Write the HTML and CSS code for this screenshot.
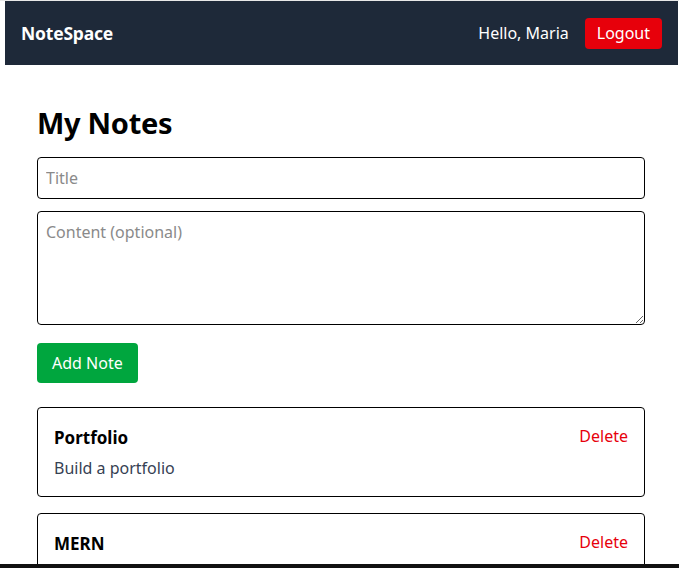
FILE: index.html
```html
<!DOCTYPE html>
<html lang="en">
<head>
<meta charset="utf-8">
<title>NoteSpace</title>
<link rel="stylesheet" href="styles.css">
</head>
<body>
<div class="frame">
  <header class="navbar">
    <div class="brand">NoteSpace</div>
    <div class="user">
      <span class="greeting">Hello, Maria</span>
      <button class="btn-logout">Logout</button>
    </div>
  </header>
  <main class="main">
    <h1 class="page-title">My Notes</h1>
    <form class="note-form">
      <input class="field" type="text" placeholder="Title">
      <textarea class="field area" rows="4" placeholder="Content (optional)"></textarea>
      <div class="form-actions"><button type="button" class="btn-add">Add Note</button></div>
    </form>
    <div class="notes">
      <div class="note">
        <div class="note-body">
          <h3 class="note-title">Portfolio</h3>
          <p class="note-text">Build a portfolio</p>
        </div>
        <button class="btn-delete">Delete</button>
      </div>
      <div class="note">
        <div class="note-body">
          <h3 class="note-title">MERN</h3>
          <p class="note-text">Learn the MERN stack</p>
        </div>
        <button class="btn-delete">Delete</button>
      </div>
    </div>
  </main>
</div>
<div class="bottom-bar"></div>
</body>
</html>
```
FILE: styles.css
```css
* { box-sizing: border-box; }
html, body { margin: 0; padding: 0; background: #fff; }
body {
  font-family: "Noto Sans", "Open Sans", sans-serif;
  font-size: 16px;
  line-height: 24px;
  color: #000;
  overflow: hidden;
}
.frame {
  border-top: 1px solid #e8e8e8;
  padding-left: 5px;
  padding-right: 1px;
}
.navbar {
  height: 64px;
  background: #1e2939;
  display: flex;
  align-items: center;
  justify-content: space-between;
  padding: 0 16px;
  color: #fff;
}
.brand { font-weight: 700; font-size: 17.5px; letter-spacing: -0.2px; }
.user { display: flex; align-items: center; gap: 16px; }
.greeting { font-size: 16px; }
.btn-logout {
  display: block;
  font: inherit;
  background: #e7000b;
  color: #fff;
  border: 0;
  border-radius: 4px;
  padding: 3px 12px;
  height: 31px;
  white-space: nowrap;
  cursor: pointer;
}
.main { padding: 40px 33px 0 32px; }
.page-title {
  margin: 0 0 16px;
  font-size: 29px;
  line-height: 36px;
  font-weight: 700;
  letter-spacing: -0.3px;
}
.note-form { display: flex; flex-direction: column; gap: 12px; margin: 0 0 24px; }
.field {
  display: block;
  width: 100%;
  font: inherit;
  font-size: 16px;
  line-height: 24px;
  padding: 8px;
  border: 1px solid #000;
  border-radius: 4px;
  color: #000;
  background: #fff;
}
.field::placeholder { color: #8a8a8a; }
.area { height: 114px; resize: vertical; }
.form-actions { padding-top: 6px; display: flex; }
.btn-add {
  display: block;
  font: inherit;
  background: #00a63e;
  color: #fff;
  border: 0;
  border-radius: 4px;
  padding: 8px 15px;
  height: 40px;
  white-space: nowrap;
  cursor: pointer;
}
.notes { display: flex; flex-direction: column; gap: 16px; }
.note {
  border: 1px solid #000;
  border-radius: 4px;
  padding: 16px;
  display: flex;
  justify-content: space-between;
  align-items: flex-start;
}
.note-title { margin: 0; font-size: 17px; line-height: 28px; font-weight: 700; }
.note-text { margin: 4px 0 0; color: #364153; }
.btn-delete {
  display: block;
  font: inherit;
  background: none;
  border: 0;
  padding: 0;
  color: #e7000b;
  cursor: pointer;
}
.bottom-bar {
  position: fixed;
  left: 0; right: 0; bottom: 0;
  height: 4px;
  background: #111;
}
```
